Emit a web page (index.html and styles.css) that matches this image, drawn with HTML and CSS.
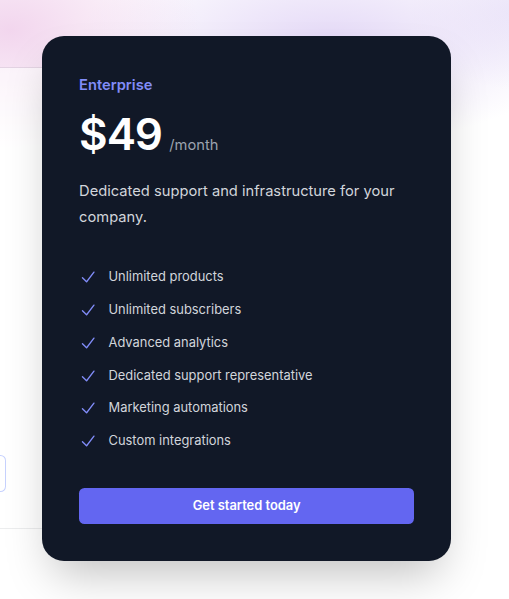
FILE: index.html
```html
<!DOCTYPE html>
<html lang="en">
<head>
<meta charset="utf-8">
<title>Pricing</title>
<link rel="stylesheet" href="styles.css">
</head>
<body>
<div class="pricing">
  <div class="tier tier-hobby">
    <a class="btn-outline" href="#" aria-label="Get started today"></a>
  </div>
  <div class="tier tier-enterprise">
    <h3 class="tier-name">Enterprise</h3>
    <p class="price"><span class="amount">$49</span><span class="period">/month</span></p>
    <p class="desc">Dedicated support and infrastructure for your company.</p>
    <ul class="features">
      <li><svg class="check" viewBox="0 0 20 20" aria-hidden="true"><path fill-rule="evenodd" d="M16.704 4.153a.75.75 0 0 1 .143 1.052l-8 10.5a.75.75 0 0 1-1.127.075l-4.5-4.5a.75.75 0 0 1 1.06-1.06l3.894 3.893 7.48-9.817a.75.75 0 0 1 1.05-.143Z" clip-rule="evenodd"/></svg>Unlimited products</li>
      <li><svg class="check" viewBox="0 0 20 20" aria-hidden="true"><path fill-rule="evenodd" d="M16.704 4.153a.75.75 0 0 1 .143 1.052l-8 10.5a.75.75 0 0 1-1.127.075l-4.5-4.5a.75.75 0 0 1 1.06-1.06l3.894 3.893 7.48-9.817a.75.75 0 0 1 1.05-.143Z" clip-rule="evenodd"/></svg>Unlimited subscribers</li>
      <li><svg class="check" viewBox="0 0 20 20" aria-hidden="true"><path fill-rule="evenodd" d="M16.704 4.153a.75.75 0 0 1 .143 1.052l-8 10.5a.75.75 0 0 1-1.127.075l-4.5-4.5a.75.75 0 0 1 1.06-1.06l3.894 3.893 7.48-9.817a.75.75 0 0 1 1.05-.143Z" clip-rule="evenodd"/></svg>Advanced analytics</li>
      <li><svg class="check" viewBox="0 0 20 20" aria-hidden="true"><path fill-rule="evenodd" d="M16.704 4.153a.75.75 0 0 1 .143 1.052l-8 10.5a.75.75 0 0 1-1.127.075l-4.5-4.5a.75.75 0 0 1 1.06-1.06l3.894 3.893 7.48-9.817a.75.75 0 0 1 1.05-.143Z" clip-rule="evenodd"/></svg>Dedicated support representative</li>
      <li><svg class="check" viewBox="0 0 20 20" aria-hidden="true"><path fill-rule="evenodd" d="M16.704 4.153a.75.75 0 0 1 .143 1.052l-8 10.5a.75.75 0 0 1-1.127.075l-4.5-4.5a.75.75 0 0 1 1.06-1.06l3.894 3.893 7.48-9.817a.75.75 0 0 1 1.05-.143Z" clip-rule="evenodd"/></svg>Marketing automations</li>
      <li><svg class="check" viewBox="0 0 20 20" aria-hidden="true"><path fill-rule="evenodd" d="M16.704 4.153a.75.75 0 0 1 .143 1.052l-8 10.5a.75.75 0 0 1-1.127.075l-4.5-4.5a.75.75 0 0 1 1.06-1.06l3.894 3.893 7.48-9.817a.75.75 0 0 1 1.05-.143Z" clip-rule="evenodd"/></svg>Custom integrations</li>
    </ul>
    <a class="btn-primary" href="#">Get started today</a>
  </div>
</div>
</body>
</html>
```
FILE: styles.css
```css
* { box-sizing: border-box; }

html, body {
  margin: 0;
  height: 100%;
}

body {
  font-family: Inter, "Noto Sans", "Liberation Sans", sans-serif;
  background-color: #ffffff;
  background-image:
    radial-gradient(ellipse 190px 120px at 10px 30px, rgba(238, 200, 232, 0.75), rgba(238, 200, 232, 0) 100%),
    radial-gradient(ellipse 250px 105px at 330px 40px, rgba(222, 208, 245, 0.8), rgba(222, 208, 245, 0) 100%),
    radial-gradient(ellipse 110px 80px at 520px 10px, rgba(226, 218, 246, 0.6), rgba(226, 218, 246, 0) 100%);
  overflow: hidden;
}

.pricing {
  display: flex;
  align-items: center;
  padding-top: 35.5px;
  margin-left: -366.7px;
}

.tier {
  flex-shrink: 0;
  width: 409px;
}

.tier-hobby {
  height: 460px;
  padding: 36.8px;
  background: rgba(255, 255, 255, 0.6);
  box-shadow: 0 0 0 1px rgba(17, 24, 39, 0.08);
  display: flex;
  flex-direction: column;
  justify-content: flex-end;
}

.btn-outline {
  display: block;
  height: 36.8px;
  border-radius: 5.5px;
  box-shadow: inset 0 0 0 1px #c7d2fe;
}

.tier-enterprise {
  position: relative;
  width: 408.7px;
  padding: 37.5px 36.8px 36.8px;
  background: #111827;
  border-radius: 22px;
  box-shadow: 0 23px 46px -11px rgba(0, 0, 0, 0.25);
}

.tier-name {
  margin: 0;
  font-size: 14.7px;
  line-height: 25.8px;
  font-weight: 600;
  color: #818cf8;
}

.price {
  margin: 13.5px 0 0;
  display: flex;
  align-items: baseline;
  gap: 7.4px;
}

.amount {
  font-size: 44px;
  line-height: 1;
  font-weight: 600;
  letter-spacing: -0.025em;
  color: #ffffff;
}

.period {
  font-size: 14.7px;
  line-height: 25.8px;
  color: #9ca3af;
}

.desc {
  margin: 20px 0 0;
  font-size: 14.7px;
  line-height: 25.8px;
  color: #d1d5db;
}

.features {
  list-style: none;
  margin: 35.5px 0 0;
  padding: 0;
  display: flex;
  flex-direction: column;
  gap: 10.8px;
  font-size: 12.9px;
  line-height: 22px;
  color: #d1d5db;
}

.features li {
  display: flex;
  gap: 11px;
}

.check {
  width: 18.4px;
  height: 22px;
  flex-shrink: 0;
  fill: #818cf8;
}

.btn-primary {
  display: block;
  margin-top: 35.5px;
  height: 36.8px;
  line-height: 36.8px;
  border-radius: 5.5px;
  background: #6366f1;
  color: #ffffff;
  font-size: 12.9px;
  font-weight: 600;
  text-align: center;
  text-decoration: none;
}
```
